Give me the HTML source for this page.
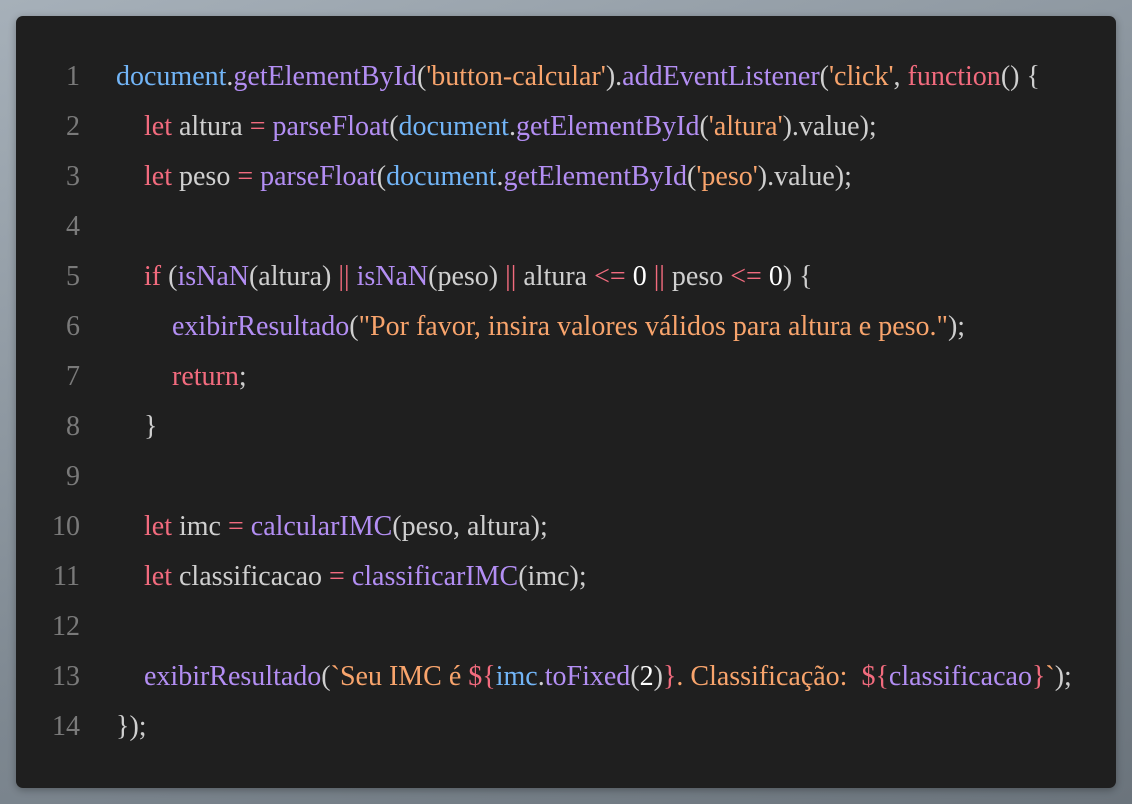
<!DOCTYPE html>
<html><head><meta charset="utf-8"><style>
html,body{margin:0;padding:0}
body{width:1132px;height:804px;overflow:hidden;background:linear-gradient(160deg,#a6b0b9 0%,#7d8790 60%,#6b747c 100%);font-family:"Liberation Serif","Times New Roman",serif;font-size:28px}
.panel{position:absolute;left:16px;top:16px;width:1100px;height:772px;background:#1f1f1f;border-radius:7px;box-shadow:0 2px 8px rgba(0,0,0,.3)}
.l{position:absolute;left:0;height:50px;line-height:50px;white-space:pre;color:#cfcfcf}
.n{position:absolute;left:0;width:64px;text-align:right;color:#7a7a7a}
.c{position:absolute;left:100px}
.i1{padding-left:28px}.i2{padding-left:56px}
.b{color:#72b5f7}.p{color:#b38ef3}.r{color:#f26b7e}.o{color:#f8a46c}.w{color:#fff}
</style></head><body><div class="panel">
<div class="l" style="top:36px"><span class="n">1</span><span class="c"><span class="b">document</span>.<span class="p">getElementById</span>(<span class="o">'button-calcular'</span>).<span class="p">addEventListener</span>(<span class="o">'click'</span>, <span class="r">function</span>() {</span></div>
<div class="l" style="top:86px"><span class="n">2</span><span class="c i1"><span class="r">let</span> altura <span class="r">=</span> <span class="p">parseFloat</span>(<span class="b">document</span>.<span class="p">getElementById</span>(<span class="o">'altura'</span>).value);</span></div>
<div class="l" style="top:136px"><span class="n">3</span><span class="c i1"><span class="r">let</span> peso <span class="r">=</span> <span class="p">parseFloat</span>(<span class="b">document</span>.<span class="p">getElementById</span>(<span class="o">'peso'</span>).value);</span></div>
<div class="l" style="top:186px"><span class="n">4</span></div>
<div class="l" style="top:236px"><span class="n">5</span><span class="c i1"><span class="r">if</span> (<span class="p">isNaN</span>(altura) <span class="r">||</span> <span class="p">isNaN</span>(peso) <span class="r">||</span> altura <span class="r">&lt;=</span> <span class="w">0</span> <span class="r">||</span> peso <span class="r">&lt;=</span> <span class="w">0</span>) {</span></div>
<div class="l" style="top:286px"><span class="n">6</span><span class="c i2"><span class="p">exibirResultado</span>(<span class="o">"Por favor, insira valores válidos para altura e peso."</span>);</span></div>
<div class="l" style="top:336px"><span class="n">7</span><span class="c i2"><span class="r">return</span>;</span></div>
<div class="l" style="top:386px"><span class="n">8</span><span class="c i1">}</span></div>
<div class="l" style="top:436px"><span class="n">9</span></div>
<div class="l" style="top:486px"><span class="n">10</span><span class="c i1"><span class="r">let</span> imc <span class="r">=</span> <span class="p">calcularIMC</span>(peso, altura);</span></div>
<div class="l" style="top:536px"><span class="n">11</span><span class="c i1"><span class="r">let</span> classificacao <span class="r">=</span> <span class="p">classificarIMC</span>(imc);</span></div>
<div class="l" style="top:586px"><span class="n">12</span></div>
<div class="l" style="top:636px"><span class="n">13</span><span class="c i1"><span class="p">exibirResultado</span>(<span class="o">`Seu IMC é </span><span class="r">${</span><span class="b">imc</span>.<span class="p">toFixed</span>(<span class="w">2</span>)<span class="r">}</span><span class="o">. Classificação:  </span><span class="r">${</span><span class="p">classificacao</span><span class="r">}</span><span class="o">`</span>);</span></div>
<div class="l" style="top:686px"><span class="n">14</span><span class="c">});</span></div>
</div></body></html>
